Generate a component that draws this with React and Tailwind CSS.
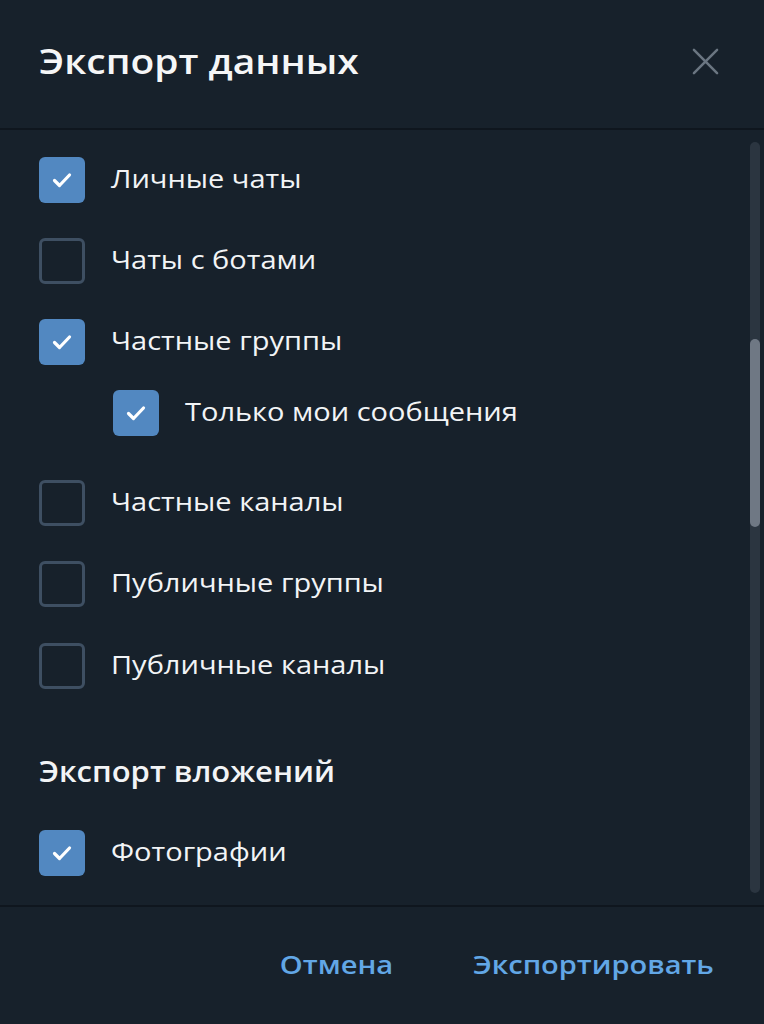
import React from "react";

const font = { fontFamily: '"Open Sans", "Noto Sans", sans-serif' };

function Check({ checked }) {
  if (checked) {
    return (
      <div className="w-[46px] h-[46px] rounded-[6px] bg-[#5288c1] flex items-center justify-center shrink-0">
        <svg width="26" height="26" viewBox="0 0 26 26" fill="none">
          <path d="M5.5 13.5 L10.5 18.5 L20.5 8" stroke="#ffffff" strokeWidth="3.2" strokeLinecap="round" strokeLinejoin="round" />
        </svg>
      </div>
    );
  }
  return <div className="w-[46px] h-[46px] rounded-[6px] border-[3px] border-[#3e4f62] shrink-0" />;
}

function Row({ checked, label, className = "" }) {
  return (
    <div className={"flex items-center " + className}>
      <Check checked={checked} />
      <span className="ml-[26px] text-[26px] text-[#f2f4f6] leading-none origin-left scale-x-[1.115] -translate-y-[2px] whitespace-nowrap">{label}</span>
    </div>
  );
}

export default function App() {
  return (
    <div className="w-[764px] h-[1024px] bg-[#17212b] flex flex-col overflow-hidden" style={font}>
      <div className="h-[128px] flex items-center justify-between pl-[39px] pr-[45px] shrink-0">
        <h1 className="text-[35px] font-semibold text-[#f5f6f7] leading-none -mt-[8px] origin-left scale-x-[1.113] whitespace-nowrap">Экспорт данных</h1>
        <svg width="27" height="27" viewBox="0 0 28 28" fill="none" className="-mt-[6px]">
          <path d="M2 2 L26 26 M26 2 L2 26" stroke="#6b7682" strokeWidth="2.6" strokeLinecap="round" />
        </svg>
      </div>
      <div className="h-[2px] bg-[#0f161e] shrink-0" />
      <div className="flex-1 flex relative">
        <div className="flex-1 flex flex-col pl-[39px] pt-[9px]">
          <Row checked label="Личные чаты" className="h-[81px]" />
          <Row checked={false} label="Чаты с ботами" className="h-[81px]" />
          <Row checked label="Частные группы" className="h-[81px]" />
          <Row checked label="Только мои сообщения" className="h-[62px] pl-[74px]" />
          <Row checked={false} label="Частные каналы" className="h-[81px] mt-[18px]" />
          <Row checked={false} label="Публичные группы" className="h-[82px]" />
          <Row checked={false} label="Публичные каналы" className="h-[82px]" />
          <div className="h-[106px] flex items-end pb-[28px]">
            <span className="text-[28px] font-semibold text-[#f2f4f6] leading-none origin-left scale-x-[1.106] whitespace-nowrap">Экспорт вложений</span>
          </div>
          <Row checked label="Фотографии" className="h-[80px]" />
        </div>
        <div className="w-[10px] mr-[4px] mt-[12px] h-[751px] rounded-full bg-[#2b3540] flex flex-col">
          <div className="h-[197px] shrink-0" />
          <div className="h-[188px] rounded-full bg-[#6f7884]" />
        </div>
      </div>
      <div className="h-[2px] bg-[#0f161e] shrink-0" />
      <div className="h-[117px] shrink-0 flex items-center justify-end pr-[50px] gap-[105px] pb-[4px]">
        <span className="text-[26px] font-semibold text-[#62a7e6] leading-none origin-right scale-x-[1.12] whitespace-nowrap">Отмена</span>
        <span className="text-[26px] font-semibold text-[#62a7e6] leading-none origin-right scale-x-[1.116] whitespace-nowrap">Экспортировать</span>
      </div>
    </div>
  );
}
